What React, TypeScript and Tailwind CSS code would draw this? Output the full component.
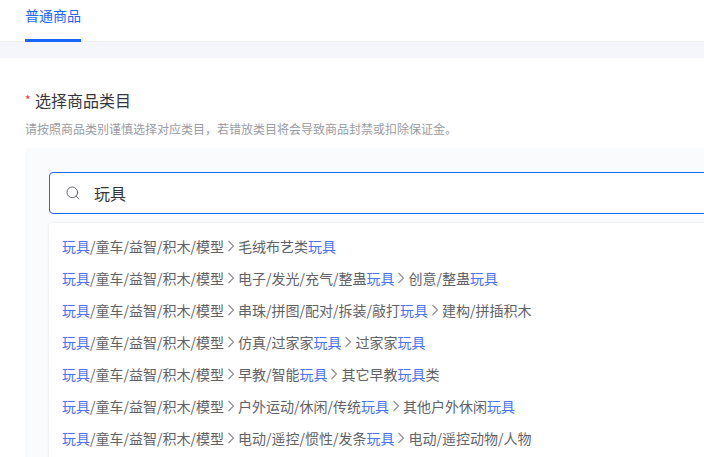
import { Search } from "lucide-react";

const BLUE = "玩具";

const rows = [
  ["毛绒布艺类玩具"],
  ["电子/发光/充气/整蛊玩具", "创意/整蛊玩具"],
  ["串珠/拼图/配对/拆装/敲打玩具", "建构/拼插积木"],
  ["仿真/过家家玩具", "过家家玩具"],
  ["早教/智能玩具", "其它早教玩具类"],
  ["户外运动/休闲/传统玩具", "其他户外休闲玩具"],
  ["电动/遥控/惯性/发条玩具", "电动/遥控动物/人物"],
];

function Chevron() {
  return (
    <svg width="14" height="14" viewBox="0 0 14 14" fill="none" className="shrink-0">
      <path d="M4.5 2 9.5 7l-5 5" stroke="#8a8c93" strokeWidth="1.1" />
    </svg>
  );
}

function Highlighted({ text }: { text: string }) {
  const parts = text.split(BLUE);
  return (
    <span>
      {parts.map((part, i) => (
        <span key={i}>
          {part}
          {i < parts.length - 1 && <span className="text-[#4a72f5]">{BLUE}</span>}
        </span>
      ))}
    </span>
  );
}

export default function App() {
  return (
    <div className="h-[457px] w-[704px] overflow-hidden bg-white font-['Microsoft_YaHei','Noto_Sans_CJK_SC',sans-serif]">
      <div className="flex h-[42px] border-b border-[#edeff3] pl-[25px]">
        <div className="h-[42px] border-b-[3px] border-[#1966ff] pt-[5px] text-[14px] leading-[20px] text-[#1966ff]">
          普通商品
        </div>
      </div>
      <div className="h-[16px] bg-[#f4f6fb]" />

      <div className="w-[1000px] pl-[25px] pt-[31px]">
        <div className="flex items-center text-[16px] leading-[22px] text-[#33363d]">
          <span className="w-[10px] text-[12px] text-[#f03050]">*</span>
          选择商品类目
        </div>
        <p className="mt-[9px] text-[12px] leading-[18px] text-[#999ba4]">
          请按照商品类别谨慎选择对应类目，若错放类目将会导致商品封禁或扣除保证金。
        </p>

        <div className="mt-[10px] bg-[#fafbfd] pl-[24px] pt-[24px]">
          <div className="flex h-[42px] items-center rounded-[4px] border border-[#1966ff] bg-white pl-[15px]">
            <Search size={16} strokeWidth={1.4} className="text-[#5c6068]" />
            <span className="ml-[13px] text-[16px] text-[#33363d]">玩具</span>
          </div>

          <div className="mt-[9px] rounded-[4px] bg-white pb-[40px] pl-[13px] pt-[7px] shadow-[0_0_3px_rgba(0,0,0,0.1)]">
            {rows.map((row, i) => (
              <div key={i} className="flex h-[32px] items-center text-[14px] text-[#5f6269]">
                <Highlighted text="玩具/童车/益智/积木/模型" />
                {row.map((part, j) => (
                  <span key={j} className="flex items-center">
                    <Chevron />
                    <Highlighted text={part} />
                  </span>
                ))}
              </div>
            ))}
          </div>
        </div>
      </div>
    </div>
  );
}
